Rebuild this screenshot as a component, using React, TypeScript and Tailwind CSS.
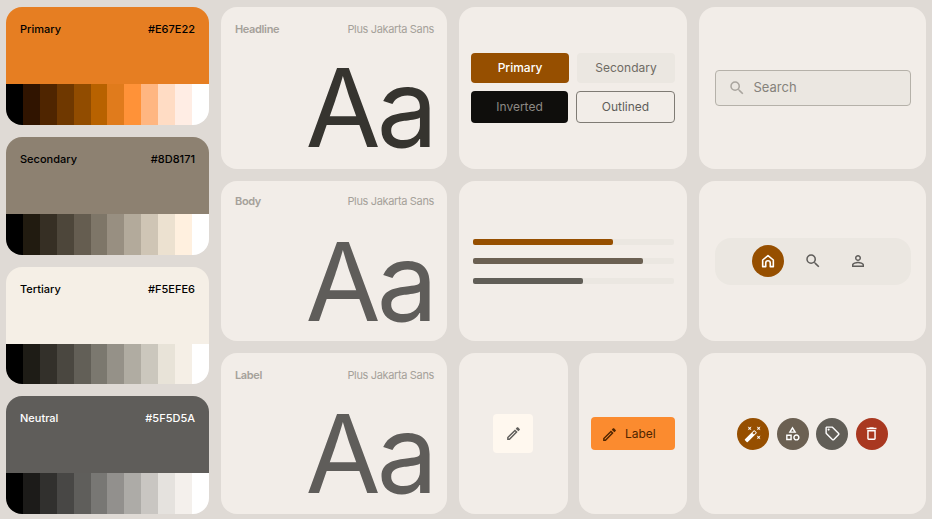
import React from "react";
import {
  MdAutoFixHigh,
  MdOutlineCategory,
  MdOutlineDelete,
  MdOutlineEdit,
  MdOutlinePersonOutline,
  MdOutlineSell,
  MdSearch,
} from "react-icons/md";

const palettes = [
  {
    name: "Primary",
    hex: "#E67E22",
    bg: "#e67e22",
    text: "#000000",
    shades: ["#000000", "#301400", "#4f2500", "#6f3800", "#914c00", "#b86200", "#e07b1c", "#ff9238", "#ffb681", "#ffdcc4", "#ffede4", "#ffffff"],
  },
  {
    name: "Secondary",
    hex: "#8D8171",
    bg: "#8d8171",
    text: "#000000",
    shades: ["#000000", "#211b10", "#362f24", "#4d463a", "#655d50", "#7e7668", "#988f81", "#b3aa9b", "#cfc5b5", "#ece1d0", "#fff0df", "#ffffff"],
  },
  {
    name: "Tertiary",
    hex: "#F5EFE6",
    bg: "#f5efe6",
    text: "#000000",
    shades: ["#000000", "#1e1c16", "#33302a", "#4a4740", "#625f57", "#7b786f", "#959188", "#b0aca2", "#cbc7bd", "#e8e3d8", "#f5efe6", "#ffffff"],
  },
  {
    name: "Neutral",
    hex: "#5F5D5A",
    bg: "#5f5d5a",
    text: "#ffffff",
    shades: ["#000000", "#1c1b19", "#31302e", "#484745", "#5f5e5b", "#787774", "#92908d", "#adaba7", "#c9c6c2", "#e5e2de", "#f4f0ec", "#ffffff"],
  },
];

function Palette({ p }: { p: (typeof palettes)[number] }) {
  return (
    <div className="flex h-[118px] flex-col overflow-hidden rounded-[16px]">
      <div
        className="flex h-[77px] items-start justify-between px-[14px] pt-[15px] text-[11px] font-medium leading-[14px]"
        style={{ backgroundColor: p.bg, color: p.text }}
      >
        <span>{p.name}</span>
        <span>{p.hex}</span>
      </div>
      <div className="grid flex-1 grid-cols-12">
        {p.shades.map((c) => (
          <div key={c} style={{ backgroundColor: c }} />
        ))}
      </div>
    </div>
  );
}

function TypeCard({ label, color, body }: { label: string; color: string; body?: boolean }) {
  return (
    <div className={`flex flex-col rounded-[16px] bg-[#f2ede8] pl-[14px] pr-[13px] ${body ? "pt-[13px]" : "pt-[15px]"}`}>
      <div className="flex justify-between text-[11px] leading-[14px] tracking-[-0.35px] text-[#a5a19a]">
        <span className="font-semibold">{label}</span>
        <span>Plus Jakarta Sans</span>
      </div>
      <div
        className={`text-right text-[109px] font-normal leading-[100px] tracking-[-4px] ${body ? "mt-[23px]" : "mt-[21px]"}`}
        style={{ color }}
      >
        Aa
      </div>
    </div>
  );
}

function Card({ children }: { children: React.ReactNode }) {
  return <div className="flex items-center justify-center rounded-[16px] bg-[#f2ede8]">{children}</div>;
}

function Circle({ bg, children }: { bg: string; children: React.ReactNode }) {
  return (
    <div className="flex h-[32px] w-[32px] items-center justify-center rounded-full text-white" style={{ backgroundColor: bg }}>
      {children}
    </div>
  );
}

function HomeIcon() {
  return (
    <svg width="16" height="16" viewBox="0 0 24 24" fill="none" stroke="currentColor" strokeWidth="2.4" strokeLinejoin="round">
      <path d="M4 20.5V10.5L12 4l8 6.5v10h-4.6V15a3.4 3.4 0 0 0-6.8 0v5.5z" />
    </svg>
  );
}

export default function App() {
  return (
    <div className="h-[519px] w-[932px] overflow-hidden bg-[#dfdad5] pl-[6px] pt-[7px] font-['Inter',sans-serif]">
      <div className="grid grid-cols-[203px_226px_228px_227px] grid-rows-[162px_160px_161px] gap-[12px]">
        <div className="row-span-3 flex flex-col gap-[12px]">
          {palettes.map((p) => (
            <Palette key={p.name} p={p} />
          ))}
        </div>

        <TypeCard label="Headline" color="#36342f" />

        <Card>
          <div className="flex flex-col gap-[8px] text-[12px] leading-none">
            <div className="flex gap-[8px]">
              <div className="flex h-[30px] w-[98px] items-center justify-center rounded-[4px] bg-[#964f00] font-medium text-white">Primary</div>
              <div className="flex h-[30px] w-[98px] items-center justify-center rounded-[4px] bg-[#ebe7e1] text-[#6f6b64]">Secondary</div>
            </div>
            <div className="flex gap-[8px]">
              <div className="flex h-[32px] w-[97px] items-center justify-center rounded-[4px] bg-[#0f0e0c] text-[#8d8a84]">Inverted</div>
              <div className="flex h-[32px] w-[99px] items-center justify-center rounded-[4px] border border-[#7f7b74] text-[#5f5d5a]">Outlined</div>
            </div>
          </div>
        </Card>

        <Card>
          <div className="flex h-[36px] w-[196px] items-center gap-[8px] rounded-[4px] border border-[#b5b1a9] bg-[#ebe7e1] pl-[12px] text-[13px] text-[#85827b]">
            <MdSearch className="text-[#a9a59e]" size={18} />
            <span>Search</span>
          </div>
        </Card>

        <TypeCard label="Body" color="#5f5d5a" body />

        <Card>
          <div className="flex w-[201px] flex-col gap-[13px] [&>*:last-child]:mt-[1px]">
            {[
              { w: "70%", c: "#964f00" },
              { w: "85%", c: "#6b6052" },
              { w: "55%", c: "#615e57" },
            ].map((b) => (
              <div key={b.c} className="h-[6px] rounded-[2px] bg-[#ebe7e1]">
                <div className="h-full rounded-[2px]" style={{ width: b.w, backgroundColor: b.c }} />
              </div>
            ))}
          </div>
        </Card>

        <Card>
          <div className="flex h-[47px] w-[196px] items-center justify-center gap-[13px] rounded-[16px] bg-[#ebe7e1] text-[#5f5d5a]">
            <Circle bg="#964f00">
              <HomeIcon />
            </Circle>
            <div className="flex h-[32px] w-[32px] items-center justify-center">
              <MdSearch size={18} />
            </div>
            <div className="flex h-[32px] w-[32px] items-center justify-center">
              <MdOutlinePersonOutline size={18} />
            </div>
          </div>
        </Card>

        <TypeCard label="Label" color="#5f5d5a" />

        <div className="grid grid-cols-[109px_108px] gap-[11px]">
          <Card>
            <div className="mr-[1px] flex h-[39px] w-[40px] items-center justify-center rounded-[4px] bg-[#fff8ef] text-[#5f5d5a]">
              <MdOutlineEdit size={17} />
            </div>
          </Card>
          <Card>
            <div className="flex h-[33px] w-[84px] items-center gap-[7px] rounded-[4px] bg-[#fb8b2f] pl-[10px] pt-[1px] text-[12px] text-[#4f2500]">
              <MdOutlineEdit size={17} />
              <span>Label</span>
            </div>
          </Card>
        </div>

        <Card>
          <div className="flex items-center gap-[7.5px]">
            <Circle bg="#964f00">
              <MdAutoFixHigh size={18} />
            </Circle>
            <Circle bg="#6b6052">
              <MdOutlineCategory size={17} />
            </Circle>
            <Circle bg="#615e57">
              <MdOutlineSell size={17} />
            </Circle>
            <Circle bg="#a93820">
              <MdOutlineDelete size={17} />
            </Circle>
          </div>
        </Card>
      </div>
    </div>
  );
}
